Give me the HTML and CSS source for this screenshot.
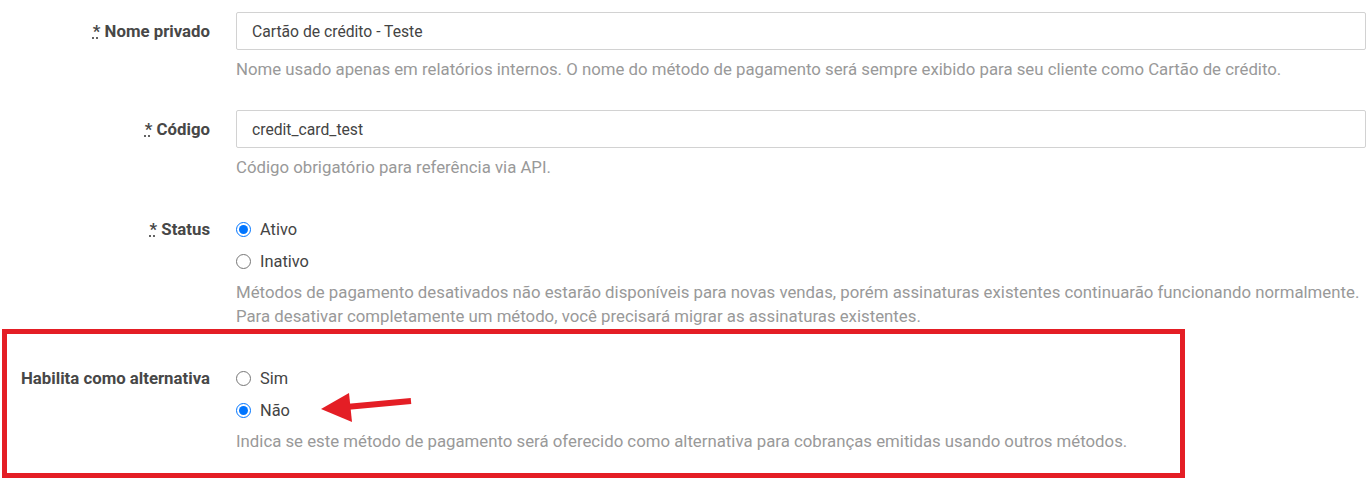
FILE: index.html
```html
<!DOCTYPE html>
<html lang="pt-BR">
<head>
  <meta charset="UTF-8">
  <title>Método de pagamento</title>
  <link rel="stylesheet" href="styles.css">
</head>
<body>
<form class="form">
  <div class="row">
    <label class="label" for="name"><abbr title="obrigatório">*</abbr> Nome privado</label>
    <div class="field">
      <input id="name" class="input" type="text" value="Cartão de crédito - Teste">
      <p class="help">Nome usado apenas em relatórios internos. O nome do método de pagamento será sempre exibido para seu cliente como Cartão de crédito.</p>
    </div>
  </div>

  <div class="row">
    <label class="label" for="code"><abbr title="obrigatório">*</abbr> Código</label>
    <div class="field">
      <input id="code" class="input" type="text" value="credit_card_test">
      <p class="help">Código obrigatório para referência via API.</p>
    </div>
  </div>

  <div class="row row-radio">
    <span class="label"><abbr title="obrigatório">*</abbr> Status</span>
    <div class="field">
      <div class="radios">
        <label class="radio"><input type="radio" name="status" checked> Ativo</label>
        <label class="radio"><input type="radio" name="status"> Inativo</label>
      </div>
      <p class="help help-tight">Métodos de pagamento desativados não estarão disponíveis para novas vendas, porém assinaturas existentes continuarão funcionando normalmente.<br>Para desativar completamente um método, você precisará migrar as assinaturas existentes.</p>
    </div>
  </div>

  <div class="row row-radio highlight">
    <span class="label">Habilita como alternativa</span>
    <div class="field">
      <div class="radios">
        <label class="radio"><input type="radio" name="alternative"> Sim</label>
        <label class="radio"><input type="radio" name="alternative" checked> Não</label>
      </div>
      <p class="help help-tight">Indica se este método de pagamento será oferecido como alternativa para cobranças emitidas usando outros métodos.</p>
    </div>

    <!-- annotation drawn over the screenshot -->
    <div class="callout"></div>
    <svg class="arrow" width="110" height="45" viewBox="0 0 110 45">
      <line x1="101" y1="15" x2="36" y2="21" stroke="#e41e25" stroke-width="6"/>
      <polygon points="11,23 39,7 42,36" fill="#e41e25"/>
    </svg>
  </div>
</form>
</body>
</html>
```

FILE: styles.css
```css
html, body {
  margin: 0;
  padding: 0;
  background: #fff;
}

body {
  font-family: Roboto, "Noto Sans", sans-serif;
  font-size: 16.8px;
  color: #444;
}

.form {
  padding: 12px 6px 0 0;
}

.row {
  display: grid;
  grid-template-columns: 210px 1fr;
  column-gap: 26px;
  margin-bottom: 29px;
}

.label {
  text-align: right;
  font-weight: bold;
  color: #474747;
  line-height: 38px;
}

.label abbr {
  text-decoration: underline dotted;
  cursor: help;
}

.row-radio .label {
  padding-top: 5px;
  line-height: 32px;
}

.input {
  display: block;
  width: 100%;
  height: 38px;
  box-sizing: border-box;
  margin: 0;
  padding: 0 15px;
  border: 1px solid #d2d2d2;
  border-radius: 2px;
  font: 15.7px Roboto, "Noto Sans", sans-serif;
  color: #444;
  outline: none;
}

.help {
  margin: 7px 0 0 0;
  line-height: 24px;
  font-size: 16.8px;
  color: #999;
}

.help-tight {
  margin-top: 3px;
}

.radios {
  padding-top: 5px;
}

.radio {
  display: flex;
  align-items: center;
  gap: 9px;
  height: 32px;
  font-size: 16.4px;
  color: #444;
}

.radio input {
  width: 15px;
  height: 15px;
  margin: 0;
}

.highlight {
  position: relative;
}

.callout {
  position: absolute;
  left: 2px;
  top: -28px;
  width: 1183px;
  height: 149px;
  box-sizing: border-box;
  border: 5px solid #e41e25;
  pointer-events: none;
}

.arrow {
  position: absolute;
  left: 310px;
  top: 29px;
  pointer-events: none;
}
```
